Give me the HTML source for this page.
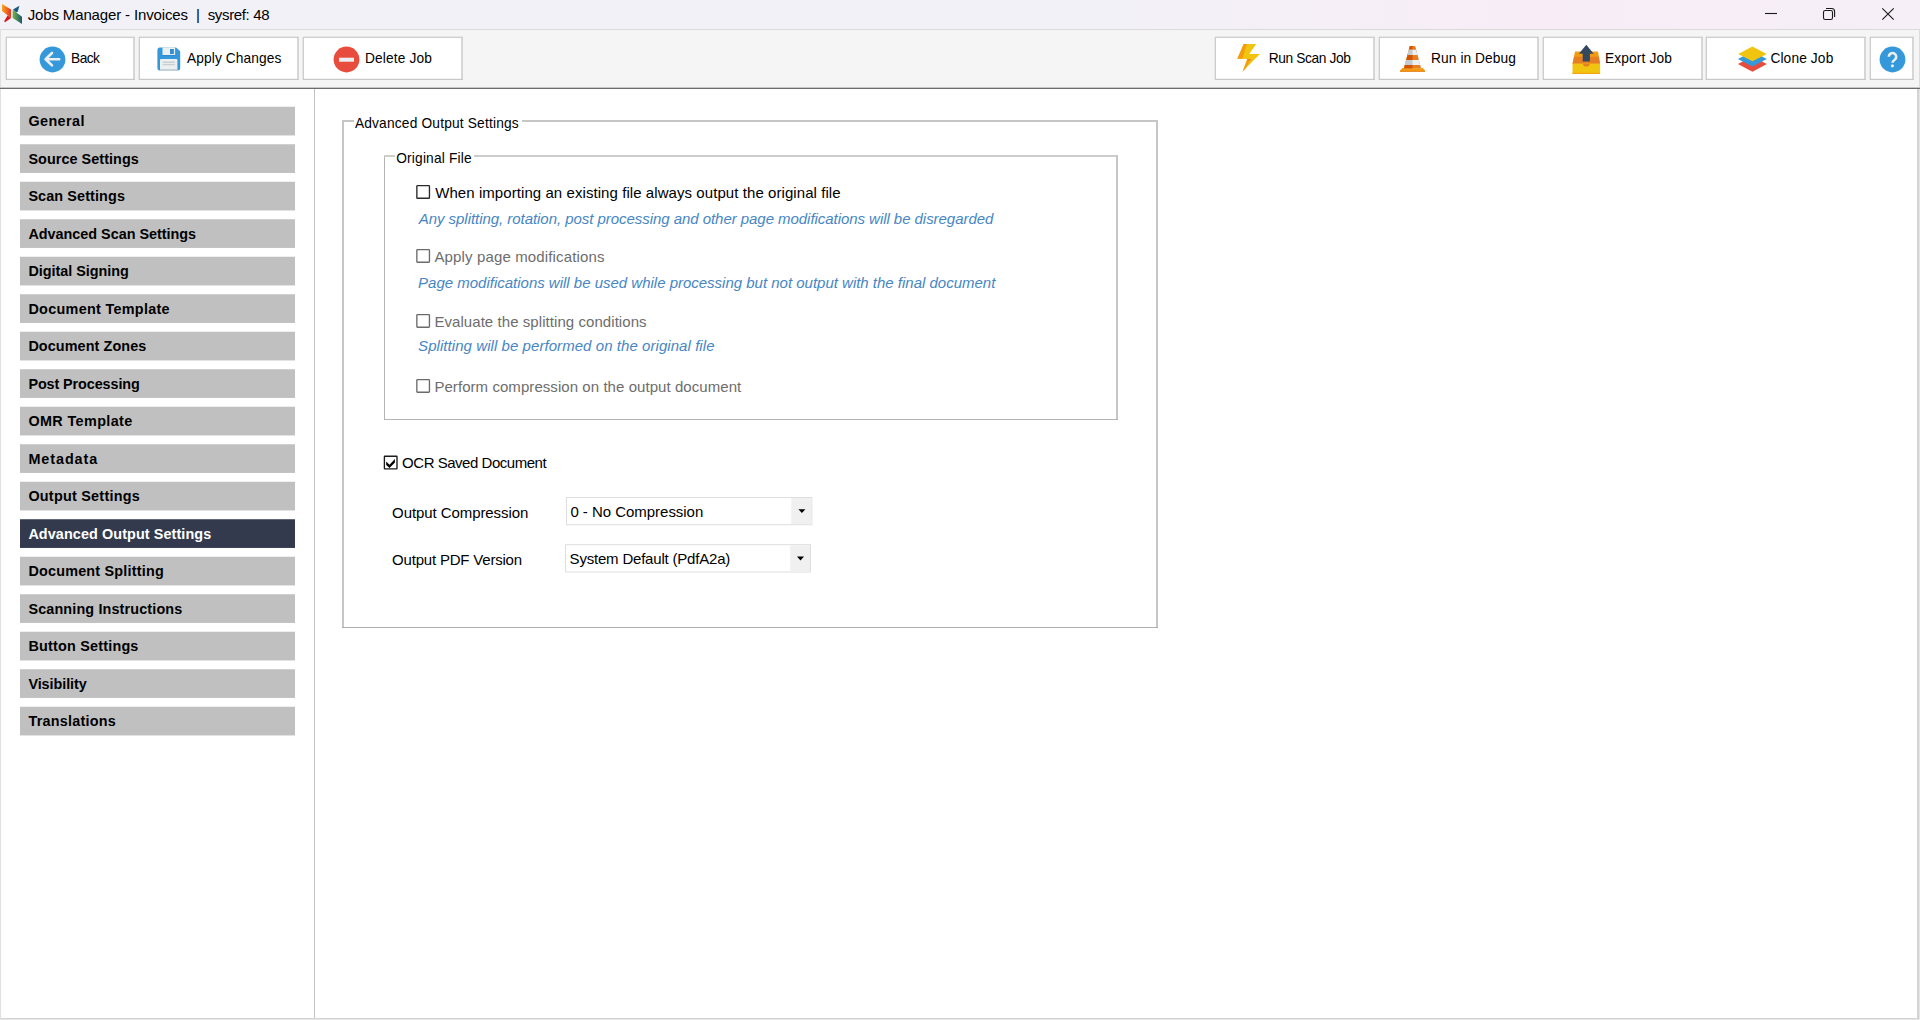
<!DOCTYPE html>
<html>
<head>
<meta charset="utf-8">
<title>Jobs Manager - Invoices | sysref: 48</title>
<style>
html,body{margin:0;padding:0;}
body{width:1920px;height:1020px;overflow:hidden;background:#fff;position:relative;font-family:"Liberation Sans",sans-serif;}
.abs{position:absolute;}
.t{position:absolute;white-space:nowrap;line-height:20px;height:20px;font-family:"Liberation Sans",sans-serif;}
.sb{position:absolute;left:20px;width:275px;height:28px;}
#bg{position:absolute;left:0;top:0;}
#fg{position:absolute;left:0;top:0;}
</style>
</head>
<body>
<!-- ===== background chrome ===== -->
<svg id="bg" width="1920" height="1020" viewBox="0 0 1920 1020">
  <defs>
    <linearGradient id="tb" x1="0" y1="0" x2="1" y2="0">
      <stop offset="0" stop-color="#f3f1f8"/>
      <stop offset="0.58" stop-color="#f3f1f8"/>
      <stop offset="0.8" stop-color="#f8edf6"/>
      <stop offset="1" stop-color="#f6eff7"/>
    </linearGradient>
    <linearGradient id="lgO" x1="0" y1="0" x2="1" y2="0">
      <stop offset="0" stop-color="#f9a61a"/>
      <stop offset="1" stop-color="#e5332a"/>
    </linearGradient>
    <linearGradient id="lgG" x1="0" y1="0" x2="1" y2="0">
      <stop offset="0" stop-color="#72b63f"/>
      <stop offset="1" stop-color="#1d5574"/>
    </linearGradient>
  </defs>
  <g shape-rendering="crispEdges">
    <!-- title bar -->
    <rect x="0" y="0" width="1920" height="29" fill="url(#tb)"/>
    <rect x="0" y="29" width="1920" height="1" fill="#dadada"/>
    <!-- toolbar -->
    <rect x="0" y="30" width="1920" height="57" fill="#f5f5f5"/>
    <!-- window edges -->
    <rect x="0" y="29" width="1" height="991" fill="#e0e0e0"/>
    <rect x="1919" y="30" width="1" height="58" fill="#dcdcdc"/>
    <rect x="1917" y="89" width="2" height="931" fill="#d4d4d4"/>
    <rect x="1919" y="89" width="1" height="931" fill="#e6e6e6"/>
    <rect x="1" y="1018" width="1918" height="1" fill="#d4d4d4"/>
    <rect x="0" y="1019" width="1920" height="1" fill="#e6e6e6"/>
    <rect x="0" y="87" width="1920" height="1" fill="#c6c6c6"/>
    <rect x="0" y="88" width="1920" height="1" fill="#6c6c6c"/>
    <!-- sidebar divider -->
    <rect x="314" y="89" width="1" height="929" fill="#c2c2c2"/>
  </g>
</svg>

<!-- ===== sidebar ===== -->
<svg class="abs" style="left:0;top:0" width="320" height="1020" viewBox="0 0 320 1020">
<rect x="20" y="106.75" width="275" height="28.7" fill="#c0c0c0"/>
<rect x="20" y="144.25" width="275" height="28.7" fill="#c0c0c0"/>
<rect x="20" y="181.75" width="275" height="28.7" fill="#c0c0c0"/>
<rect x="20" y="219.25" width="275" height="28.7" fill="#c0c0c0"/>
<rect x="20" y="256.75" width="275" height="28.7" fill="#c0c0c0"/>
<rect x="20" y="294.25" width="275" height="28.7" fill="#c0c0c0"/>
<rect x="20" y="331.75" width="275" height="28.7" fill="#c0c0c0"/>
<rect x="20" y="369.25" width="275" height="28.7" fill="#c0c0c0"/>
<rect x="20" y="406.75" width="275" height="28.7" fill="#c0c0c0"/>
<rect x="20" y="444.25" width="275" height="28.7" fill="#c0c0c0"/>
<rect x="20" y="481.75" width="275" height="28.7" fill="#c0c0c0"/>
<rect x="20" y="519.25" width="275" height="28.7" fill="#333a4e"/>
<rect x="20" y="556.75" width="275" height="28.7" fill="#c0c0c0"/>
<rect x="20" y="594.25" width="275" height="28.7" fill="#c0c0c0"/>
<rect x="20" y="631.75" width="275" height="28.7" fill="#c0c0c0"/>
<rect x="20" y="669.25" width="275" height="28.7" fill="#c0c0c0"/>
<rect x="20" y="706.75" width="275" height="28.7" fill="#c0c0c0"/>
</svg>

<!-- ===== foreground vector layer ===== -->
<svg id="fg" width="1920" height="1020" viewBox="0 0 1920 1020">
  <!-- app logo -->
  <g id="logo">
    <polygon points="2,4 11,9.4 11,18 2,11" fill="url(#lgO)"/>
    <polygon points="7.6,15.4 11,18 5,22.3 4.2,21.2" fill="#d8121b"/>
    <polygon points="12.6,9.8 22,16.8 22,24 12.6,18" fill="url(#lgG)"/>
    <polygon points="19.4,5.8 13,9.6 16.4,12.4 17.8,11.4" fill="#185a82"/>
  </g>

  <!-- window controls -->
  <g stroke="#1a1a1a" stroke-width="1.1" fill="none">
    <line x1="1765" y1="13.5" x2="1777" y2="13.5"/>
    <rect x="1823.5" y="10.5" width="9" height="9" rx="1.8"/>
    <path d="M1826 8.5 h5.6 a3 3 0 0 1 3 3 v5.6"/>
    <path d="M1882.3 8.3 L1893.7 19.7 M1893.7 8.3 L1882.3 19.7"/>
  </g>

  <!-- toolbar buttons -->
  <g id="btns" shape-rendering="crispEdges">
    <rect x="7" y="38" width="127" height="41" fill="#fff"/>
    <rect x="6" y="36" width="129" height="1" fill="#e6e6e6"/>
    <rect x="6" y="37" width="129" height="1" fill="#cecece"/>
    <rect x="5" y="37" width="1" height="43" fill="#e6e6e6"/>
    <rect x="6" y="38" width="1" height="42" fill="#cdcdcd"/>
    <rect x="133" y="38" width="2" height="42" fill="#d6d6d6"/>
    <rect x="7" y="78" width="126" height="1" fill="#f2f2f2"/>
    <rect x="6" y="79" width="129" height="1" fill="#c8c8c8"/>
    <rect x="140" y="38" width="158" height="41" fill="#fff"/>
    <rect x="139" y="36" width="160" height="1" fill="#e6e6e6"/>
    <rect x="139" y="37" width="160" height="1" fill="#cecece"/>
    <rect x="138" y="37" width="1" height="43" fill="#e6e6e6"/>
    <rect x="139" y="38" width="1" height="42" fill="#cdcdcd"/>
    <rect x="297" y="38" width="2" height="42" fill="#d6d6d6"/>
    <rect x="140" y="78" width="157" height="1" fill="#f2f2f2"/>
    <rect x="139" y="79" width="160" height="1" fill="#c8c8c8"/>
    <rect x="304" y="38" width="158" height="41" fill="#fff"/>
    <rect x="303" y="36" width="160" height="1" fill="#e6e6e6"/>
    <rect x="303" y="37" width="160" height="1" fill="#cecece"/>
    <rect x="302" y="37" width="1" height="43" fill="#e6e6e6"/>
    <rect x="303" y="38" width="1" height="42" fill="#cdcdcd"/>
    <rect x="461" y="38" width="2" height="42" fill="#d6d6d6"/>
    <rect x="304" y="78" width="157" height="1" fill="#f2f2f2"/>
    <rect x="303" y="79" width="160" height="1" fill="#c8c8c8"/>
    <rect x="1216" y="38" width="158" height="41" fill="#fff"/>
    <rect x="1215" y="36" width="160" height="1" fill="#e6e6e6"/>
    <rect x="1215" y="37" width="160" height="1" fill="#cecece"/>
    <rect x="1214" y="37" width="1" height="43" fill="#e6e6e6"/>
    <rect x="1215" y="38" width="1" height="42" fill="#cdcdcd"/>
    <rect x="1373" y="38" width="2" height="42" fill="#d6d6d6"/>
    <rect x="1216" y="78" width="157" height="1" fill="#f2f2f2"/>
    <rect x="1215" y="79" width="160" height="1" fill="#c8c8c8"/>
    <rect x="1380" y="38" width="158" height="41" fill="#fff"/>
    <rect x="1379" y="36" width="160" height="1" fill="#e6e6e6"/>
    <rect x="1379" y="37" width="160" height="1" fill="#cecece"/>
    <rect x="1378" y="37" width="1" height="43" fill="#e6e6e6"/>
    <rect x="1379" y="38" width="1" height="42" fill="#cdcdcd"/>
    <rect x="1537" y="38" width="2" height="42" fill="#d6d6d6"/>
    <rect x="1380" y="78" width="157" height="1" fill="#f2f2f2"/>
    <rect x="1379" y="79" width="160" height="1" fill="#c8c8c8"/>
    <rect x="1544" y="38" width="158" height="41" fill="#fff"/>
    <rect x="1543" y="36" width="160" height="1" fill="#e6e6e6"/>
    <rect x="1543" y="37" width="160" height="1" fill="#cecece"/>
    <rect x="1542" y="37" width="1" height="43" fill="#e6e6e6"/>
    <rect x="1543" y="38" width="1" height="42" fill="#cdcdcd"/>
    <rect x="1701" y="38" width="2" height="42" fill="#d6d6d6"/>
    <rect x="1544" y="78" width="157" height="1" fill="#f2f2f2"/>
    <rect x="1543" y="79" width="160" height="1" fill="#c8c8c8"/>
    <rect x="1707" y="38" width="158" height="41" fill="#fff"/>
    <rect x="1706" y="36" width="160" height="1" fill="#e6e6e6"/>
    <rect x="1706" y="37" width="160" height="1" fill="#cecece"/>
    <rect x="1705" y="37" width="1" height="43" fill="#e6e6e6"/>
    <rect x="1706" y="38" width="1" height="42" fill="#cdcdcd"/>
    <rect x="1864" y="38" width="2" height="42" fill="#d6d6d6"/>
    <rect x="1707" y="78" width="157" height="1" fill="#f2f2f2"/>
    <rect x="1706" y="79" width="160" height="1" fill="#c8c8c8"/>
    <rect x="1871" y="38" width="42" height="41" fill="#fff"/>
    <rect x="1870" y="36" width="44" height="1" fill="#e6e6e6"/>
    <rect x="1870" y="37" width="44" height="1" fill="#cecece"/>
    <rect x="1869" y="37" width="1" height="43" fill="#e6e6e6"/>
    <rect x="1870" y="38" width="1" height="42" fill="#cdcdcd"/>
    <rect x="1912" y="38" width="2" height="42" fill="#d6d6d6"/>
    <rect x="1871" y="78" width="41" height="1" fill="#f2f2f2"/>
    <rect x="1870" y="79" width="44" height="1" fill="#c8c8c8"/>
  </g>

  <!-- Back icon -->
  <circle cx="52.5" cy="59.5" r="12.9" fill="#3498db"/>
  <path d="M59.2 59.2 H46.4 M52 53 L45.6 59.2 L52 65.4" stroke="#ecf0f1" stroke-width="2.6" fill="none" stroke-linecap="round" stroke-linejoin="round"/>

  <!-- Save icon -->
  <g id="save">
    <path d="M159.9 47.4 H176.1 L180.2 51.3 V67.9 a2.5 2.5 0 0 1 -2.5 2.5 H159.9 a2.5 2.5 0 0 1 -2.5 -2.5 V49.9 a2.5 2.5 0 0 1 2.5 -2.5 Z" fill="#3498db"/>
    <rect x="162.5" y="47.4" width="12.6" height="7.6" fill="#ecf0f1"/>
    <rect x="162.5" y="55" width="12.6" height="0.9" fill="#2f8acb"/>
    <rect x="170" y="49" width="3.9" height="5.1" fill="#3290d6"/>
    <path d="M160 70.4 V60 a1 1 0 0 1 1 -1 H176.4 a1 1 0 0 1 1 1 V70.4 Z" fill="#ecf0f1"/>
    <rect x="160" y="69.3" width="17.4" height="1.1" fill="#bdc3c7"/>
    <rect x="162.5" y="61.4" width="12.4" height="1.5" fill="#c9cfd2"/>
    <rect x="162.5" y="63.9" width="12.4" height="1.4" fill="#c9cfd2"/>
  </g>

  <!-- Delete icon -->
  <circle cx="346.5" cy="59.5" r="12.9" fill="#e74c3c"/>
  <rect x="339" y="57.7" width="15" height="4" fill="#ecf0f1"/>

  <!-- Bolt icon -->
  <g id="bolt">
    <polygon points="1243.7,43.9 1256.2,43.9 1249.2,54 1259.9,54 1242.6,71.6 1247.3,58.9 1237.3,58.7" fill="#f1c40f"/>
    <polygon points="1243.7,43.9 1246.9,43.9 1242.4,58.7 1237.3,58.7" fill="#f39c12"/>
    <polygon points="1247.3,58.9 1251.4,59 1244.4,69.8 1242.6,71.6" fill="#f39c12"/>
    <polygon points="1247.3,58.9 1251.4,59 1250.6,60.2 1246.9,60" fill="#e67e22" opacity="0.8"/>
  </g>

  <!-- Cone icon -->
  <g id="cone">
    <polygon points="1409.8,46 1415.2,46 1421.2,68.8 1403.8,68.8" fill="#e67e22"/>
    <polygon points="1409.8,46 1412.5,46 1412.5,68.8 1403.8,68.8" fill="#d35400"/>
    <polygon points="1408.9,49.8 1416.1,49.8 1417.5,54.9 1407.5,54.9" fill="#ecf0f1"/>
    <polygon points="1408.9,49.8 1412.5,49.8 1412.5,54.9 1407.5,54.9" fill="#c4cacd"/>
    <polygon points="1406.1,60 1418.9,60 1420.2,65.1 1404.8,65.1" fill="#ecf0f1"/>
    <polygon points="1406.1,60 1412.5,60 1412.5,65.1 1404.8,65.1" fill="#c4cacd"/>
    <path d="M1402.4 67.9 H1403.9 L1404 68.6 H1421 L1421.1 67.9 H1422.8 L1425 70.4 V71.7 H1400 V70.4 Z" fill="#f39c12"/>
    <rect x="1400" y="70.8" width="25" height="0.9" fill="#e67e22"/>
  </g>

  <!-- Export icon -->
  <g id="export">
    <polygon points="1575,51.4 1598,51.4 1600,63.8 1572.5,63.8" fill="#f39c12"/>
    <polygon points="1574.1,56.8 1598.9,56.8 1600,63.8 1572.5,63.8" fill="#e67e22"/>
    <rect x="1572.5" y="63.7" width="27.6" height="10.2" fill="#f1c40f"/>
    <rect x="1572.5" y="72.9" width="27.6" height="1" fill="#f39c12"/>
    <path d="M1583.1 63.7 H1589.7 a3.3 2.8 0 0 1 -6.6 0 Z" fill="#e67e22"/>
    <polygon points="1586.3,44.8 1593.7,53.7 1589.9,53.7 1589.9,61.5 1582.7,61.5 1582.7,53.7 1578.9,53.7" fill="#34495e"/>
  </g>

  <!-- Clone icon -->
  <g id="clone">
    <polygon points="1737.9,64.1 1752.4,56.6 1766.9,64.1 1752.4,71.7" fill="#e74c3c"/>
    <polygon points="1737.9,59 1752.4,51.5 1766.9,59 1752.4,66.5" fill="#3498db"/>
    <polygon points="1738.2,53.9 1752.4,46.4 1766.7,53.9 1752.4,61.3" fill="#f1c40f"/>
  </g>

  <!-- Help icon -->
  <circle cx="1892.5" cy="59.5" r="12.9" fill="#3498db"/>
  <path d="M1888.8 56.8 a3.7 3.7 0 1 1 5.9 2.9 q-2.2 1.5 -2.2 3.1" stroke="#ecf0f1" stroke-width="2.6" fill="none"/>
  <rect x="1891" y="64.5" width="2.8" height="2.8" rx="0.7" fill="#ecf0f1"/>

  <!-- group boxes -->
  <g shape-rendering="crispEdges">
    <!-- outer -->
    <rect x="342" y="120" width="2" height="508" fill="#c6c6c6"/>
    <rect x="342" y="120" width="11.5" height="2" fill="#c6c6c6"/>
    <rect x="522" y="120" width="636" height="2" fill="#c6c6c6"/>
    <rect x="1156" y="120" width="2" height="508" fill="#c6c6c6"/>
    <rect x="342" y="627" width="816" height="1" fill="#adadad"/>
    <!-- inner -->
    <rect x="384" y="155" width="1" height="265" fill="#b4b4b4"/>
    <rect x="384" y="155" width="11" height="2" fill="#cdcdcd"/>
    <rect x="474" y="155" width="644" height="2" fill="#cdcdcd"/>
    <rect x="1116" y="155" width="2" height="265" fill="#c6c6c6"/>
    <rect x="384" y="419" width="734" height="1" fill="#b4b4b4"/>
  </g>

  <!-- checkboxes -->
  <g fill="#fff" stroke-width="1.35">
    <rect x="416.85" y="185.65" width="12.6" height="12.6" rx="0.6" stroke="#2b2b2b"/>
    <rect x="416.85" y="249.6" width="12.6" height="12.6" rx="0.6" stroke="#6b6b6b"/>
    <rect x="416.85" y="314.6" width="12.6" height="12.6" rx="0.6" stroke="#6b6b6b"/>
    <rect x="416.85" y="379.6" width="12.6" height="12.6" rx="0.6" stroke="#6b6b6b"/>
    <rect x="384.4" y="456.25" width="12.6" height="12.6" rx="0.4" stroke="#1a1a1a"/>
  </g>
  <polygon points="386.2,461.5 389.5,464.8 394.9,459.1 394.9,462.5 389.5,468 386.2,464.9" fill="#000"/>

  <!-- combo boxes -->
  <g>
    <rect x="566" y="497" width="246.3" height="28.2" fill="#dedede"/>
    <rect x="567" y="498" width="244.3" height="26.2" fill="#fff"/>
    <rect x="791.2" y="498" width="20.1" height="26.2" fill="#f0f0f0"/>
    <rect x="565" y="544.2" width="246" height="28.3" fill="#dedede"/>
    <rect x="566" y="545.2" width="244" height="26.3" fill="#fff"/>
    <rect x="790.2" y="545.2" width="19.8" height="26.3" fill="#f0f0f0"/>
  </g>
  <polygon points="798.4,509.2 805.4,509.2 801.9,513" fill="#000"/>
  <polygon points="797,556.6 804,556.6 800.5,560.4" fill="#000"/>
</svg>

<!-- ===== text ===== -->
<span class="t" style="left:27.70px;top:5.00px;font-size:15.0px;letter-spacing:-0.142px;color:#000;">Jobs Manager - Invoices</span>
<span class="t" style="left:196.10px;top:5.00px;font-size:15.0px;letter-spacing:0.000px;color:#000;">|</span>
<span class="t" style="left:207.70px;top:5.00px;font-size:15.0px;letter-spacing:-0.348px;color:#000;">sysref: 48</span>
<span class="t" style="left:71.10px;top:49.00px;font-size:13.75px;letter-spacing:-0.626px;color:#000;">Back</span>
<span class="t" style="left:187.10px;top:49.00px;font-size:13.75px;letter-spacing:0.078px;color:#000;">Apply Changes</span>
<span class="t" style="left:364.90px;top:49.00px;font-size:13.75px;letter-spacing:0.150px;color:#000;">Delete Job</span>
<span class="t" style="left:1268.70px;top:49.00px;font-size:13.75px;letter-spacing:-0.389px;color:#000;">Run Scan Job</span>
<span class="t" style="left:1431.10px;top:49.00px;font-size:13.75px;letter-spacing:0.064px;color:#000;">Run in Debug</span>
<span class="t" style="left:1604.90px;top:49.00px;font-size:13.75px;letter-spacing:0.152px;color:#000;">Export Job</span>
<span class="t" style="left:1770.40px;top:49.00px;font-size:13.75px;letter-spacing:0.122px;color:#000;">Clone Job</span>
<span class="t" style="left:28.40px;top:111.00px;font-size:14.4px;letter-spacing:0.401px;color:#000;font-weight:bold;">General</span>
<span class="t" style="left:28.40px;top:149.00px;font-size:14.4px;letter-spacing:0.060px;color:#000;font-weight:bold;">Source Settings</span>
<span class="t" style="left:28.40px;top:186.00px;font-size:14.4px;letter-spacing:0.111px;color:#000;font-weight:bold;">Scan Settings</span>
<span class="t" style="left:28.40px;top:224.00px;font-size:14.4px;letter-spacing:-0.012px;color:#000;font-weight:bold;">Advanced Scan Settings</span>
<span class="t" style="left:28.40px;top:261.00px;font-size:14.4px;letter-spacing:-0.024px;color:#000;font-weight:bold;">Digital Signing</span>
<span class="t" style="left:28.40px;top:299.00px;font-size:14.4px;letter-spacing:0.296px;color:#000;font-weight:bold;">Document Template</span>
<span class="t" style="left:28.40px;top:336.00px;font-size:14.4px;letter-spacing:0.090px;color:#000;font-weight:bold;">Document Zones</span>
<span class="t" style="left:28.40px;top:374.00px;font-size:14.4px;letter-spacing:-0.098px;color:#000;font-weight:bold;">Post Processing</span>
<span class="t" style="left:28.40px;top:411.00px;font-size:14.4px;letter-spacing:0.383px;color:#000;font-weight:bold;">OMR Template</span>
<span class="t" style="left:28.40px;top:449.00px;font-size:14.4px;letter-spacing:0.930px;color:#000;font-weight:bold;">Metadata</span>
<span class="t" style="left:28.40px;top:486.00px;font-size:14.4px;letter-spacing:0.248px;color:#000;font-weight:bold;">Output Settings</span>
<span class="t" style="left:28.40px;top:524.00px;font-size:14.4px;letter-spacing:0.091px;color:#fff;font-weight:bold;">Advanced Output Settings</span>
<span class="t" style="left:28.40px;top:561.00px;font-size:14.4px;letter-spacing:0.200px;color:#000;font-weight:bold;">Document Splitting</span>
<span class="t" style="left:28.40px;top:599.00px;font-size:14.4px;letter-spacing:0.139px;color:#000;font-weight:bold;">Scanning Instructions</span>
<span class="t" style="left:28.40px;top:636.00px;font-size:14.4px;letter-spacing:0.205px;color:#000;font-weight:bold;">Button Settings</span>
<span class="t" style="left:28.40px;top:674.00px;font-size:14.4px;letter-spacing:-0.058px;color:#000;font-weight:bold;">Visibility</span>
<span class="t" style="left:28.40px;top:711.00px;font-size:14.4px;letter-spacing:0.247px;color:#000;font-weight:bold;">Translations</span>
<span class="t" style="left:354.90px;top:114.00px;font-size:13.75px;letter-spacing:0.175px;color:#000;">Advanced Output Settings</span>
<span class="t" style="left:396.20px;top:149.00px;font-size:13.75px;letter-spacing:0.178px;color:#000;">Original File</span>
<span class="t" style="left:435.20px;top:183.00px;font-size:15.0px;letter-spacing:0.070px;color:#000;">When importing an existing file always output the original file</span>
<span class="t" style="left:418.80px;top:209.00px;font-size:15.0px;letter-spacing:-0.047px;color:#4686c4;font-style:italic;">Any splitting, rotation, post processing and other page modifications will be disregarded</span>
<span class="t" style="left:434.40px;top:247.00px;font-size:15.0px;letter-spacing:0.145px;color:#6d6d6d;">Apply page modifications</span>
<span class="t" style="left:418.10px;top:273.00px;font-size:15.0px;letter-spacing:-0.007px;color:#4686c4;font-style:italic;">Page modifications will be used while processing but not output with the final document</span>
<span class="t" style="left:434.40px;top:312.00px;font-size:15.0px;letter-spacing:0.064px;color:#6d6d6d;">Evaluate the splitting conditions</span>
<span class="t" style="left:418.10px;top:336.00px;font-size:15.0px;letter-spacing:0.062px;color:#4686c4;font-style:italic;">Splitting will be performed on the original file</span>
<span class="t" style="left:434.40px;top:377.00px;font-size:15.0px;letter-spacing:0.062px;color:#6d6d6d;">Perform compression on the output document</span>
<span class="t" style="left:402.10px;top:453.00px;font-size:15.0px;letter-spacing:-0.475px;color:#000;">OCR Saved Document</span>
<span class="t" style="left:392.10px;top:503.00px;font-size:15.0px;letter-spacing:-0.081px;color:#000;">Output Compression</span>
<span class="t" style="left:570.40px;top:502.00px;font-size:15.0px;letter-spacing:-0.029px;color:#000;">0 - No Compression</span>
<span class="t" style="left:392.10px;top:550.00px;font-size:15.0px;letter-spacing:-0.200px;color:#000;">Output PDF Version</span>
<span class="t" style="left:569.60px;top:549.00px;font-size:15.0px;letter-spacing:-0.199px;color:#000;">System Default (PdfA2a)</span>
</body>
</html>
